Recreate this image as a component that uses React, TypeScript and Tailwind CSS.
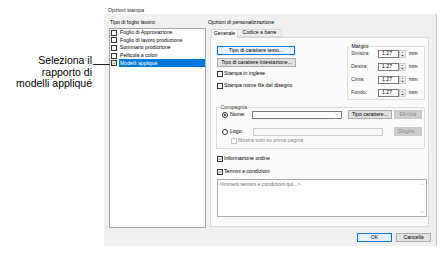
import React from "react";

const FONT = "font-['Liberation_Sans',Arial,sans-serif]";

function Check({ checked = false, disabled = false }: { checked?: boolean; disabled?: boolean }) {
  return (
    <span
      className={`w-[6px] h-[6px] shrink-0 border bg-white flex items-center justify-center ${
        disabled ? "border-[#c4c4c4]" : "border-[#333333]"
      }`}
    >
      {checked && (
        <svg viewBox="0 0 4 4" className="w-[4px] h-[4px]">
          <path d="M0.4 2 L1.5 3.1 L3.6 0.7" stroke="#222" strokeWidth="0.6" fill="none" />
        </svg>
      )}
    </span>
  );
}

function Radio({ on = false }: { on?: boolean }) {
  return (
    <span className="w-[6px] h-[6px] shrink-0 rounded-full border border-[#333333] bg-white flex items-center justify-center">
      {on && <span className="w-[2px] h-[2px] rounded-full bg-[#222]" />}
    </span>
  );
}

function Btn({
  label,
  w,
  primary = false,
  disabled = false,
}: {
  label: string;
  w: string;
  primary?: boolean;
  disabled?: boolean;
}) {
  return (
    <div
      className={`${w} h-[9px] shrink-0 border flex items-center justify-center leading-none ${
        primary
          ? "border-[#0078d7] bg-[#e5f1fb] text-black"
          : disabled
          ? "border-[#cccccc] bg-[#cccccc] text-[#8c8c8c]"
          : "border-[#adadad] bg-[#e1e1e1] text-black"
      }`}
    >
      {label}
    </div>
  );
}

function Spin() {
  return (
    <div className="w-[7px] h-[8px] border border-[#cfcfcf] bg-[#f0f0f0] flex flex-col">
      <div className="flex-1 flex items-center justify-center border-b border-[#d9d9d9]">
        <svg viewBox="0 0 4 2" className="w-[3px] h-[1.5px]">
          <path d="M0 2 L2 0 L4 2 Z" fill="#555" />
        </svg>
      </div>
      <div className="flex-1 flex items-center justify-center">
        <svg viewBox="0 0 4 2" className="w-[3px] h-[1.5px]">
          <path d="M0 0 L2 2 L4 0 Z" fill="#555" />
        </svg>
      </div>
    </div>
  );
}

const sheets = [
  "Foglio di Approvazione",
  "Foglio di lavoro produzione",
  "Sommario produzione",
  "Pellicola a colori",
  "Modelli appliqué",
];

const margins = ["Sinistra:", "Destra:", "Cima:", "Fondo:"];

export default function App() {
  return (
    <div className={`w-[448px] h-[261px] bg-white flex overflow-hidden ${FONT}`}>
      {/* annotazione */}
      <div className="w-[104px] shrink-0 relative">
        <div className="pt-[55px] pr-[12px] text-right text-[10.5px] leading-[11.5px] text-black">
          Seleziona il
          <br />
          rapporto di
          <br />
          modelli appliqué
        </div>
        <div className="absolute left-[93px] top-[64px] w-[17px] h-px bg-[#222]" />
      </div>

      {/* dialogo */}
      <div className="w-[333px] shrink-0 flex flex-col text-[5.2px] leading-none text-black">
        <div className="h-[14px] pl-[4px] pt-[8px] text-[#222]">Opzioni stampa</div>

        <div className="h-[232px] bg-[#f0f0f0] border-r border-[#c8c8c8] flex flex-col pl-[5px] pt-[3px]">
          <div className="flex">
            {/* tipo di foglio */}
            <div className="w-[97px] shrink-0 flex flex-col">
              <div className="h-[11px] pl-[1px] flex items-center">Tipo di foglio lavoro</div>
              <div className="h-[200px] bg-white border border-[#a8a8a8] pl-[1px]">
                {sheets.map((s, i) => (
                  <div key={s} className="h-[7.6px] flex items-center gap-[2px]">
                    <Check checked={i === 4} />
                    <span
                      className={`h-full flex-1 flex items-center pl-[1px] ${
                        i === 4 ? "bg-[#0078d7] text-white" : ""
                      }`}
                    >
                      {s}
                    </span>
                  </div>
                ))}
              </div>
            </div>

            {/* opzioni di personalizzazione */}
            <div className="ml-[2px] w-[222px] shrink-0 flex flex-col">
              <div className="h-[11px] flex items-center">Opzioni di personalizzazione</div>
              <div className="h-[9px] flex items-end pl-[3px]">
                <div className="h-[9px] w-[27px] bg-[#fafafa] border border-b-0 border-[#d9d9d9] flex items-center justify-center -mb-px relative z-10">
                  Generale
                </div>
                <div className="h-[8px] w-[44px] bg-[#f0f0f0] border border-l-0 border-[#d9d9d9] flex items-center justify-center">
                  Codice a barre
                </div>
              </div>

              <div className="ml-[2px] w-[219px] h-[190px] bg-[#fafafa] border border-[#d9d9d9] flex flex-col pl-[5px] pr-[3px] pt-[8px]">
                {/* riga superiore */}
                <div className="flex h-[54px]">
                  <div className="flex flex-col pl-[1px]">
                    <Btn label="Tipo di carattere testo..." w="w-[78px]" primary />
                    <div className="mt-[3px]">
                      <Btn label="Tipo di carattere intestazione..." w="w-[79px]" />
                    </div>
                    <div className="mt-[4px] flex items-center gap-[1px] h-[6px]">
                      <Check />
                      Stampa in inglese
                    </div>
                    <div className="mt-[6px] flex items-center gap-[1px] h-[6px]">
                      <Check />
                      Stampa nome file del disegno
                    </div>
                  </div>

                  <div className="ml-auto w-[78px] h-[54px] border border-[#dcdcdc] rounded-[1px] relative flex flex-col pl-[3px] pt-[3px] gap-[5px]">
                    <span className="absolute -top-[3px] left-[3px] bg-[#fafafa] px-[0.5px]">Margini</span>
                    {margins.map((m) => (
                      <div key={m} className="h-[8px] flex items-center">
                        <span className="w-[27px] text-[#333]">{m}</span>
                        <div className="w-[21px] h-[8px] bg-white border border-[#7a7a7a] flex items-center pl-[3px]">
                          1.27
                        </div>
                        <Spin />
                        <span className="ml-[3px]">mm</span>
                      </div>
                    ))}
                  </div>
                </div>

                {/* compagnia */}
                <div className="mt-[7px] h-[42px] border border-[#dcdcdc] rounded-[1px] relative flex flex-col pl-[5px] pr-[2px] pt-[2px]">
                  <span className="absolute -top-[3px] left-[3px] bg-[#fafafa] px-[0.5px] text-[#333]">Compagnia</span>
                  <div className="h-[9px] flex items-center">
                    <Radio on />
                    <span className="ml-[2px] w-[23px]">Nome:</span>
                    <div className="w-[92px] h-[8px] bg-white border border-[#7a7a7a] flex items-center justify-end pr-[2px]">
                      <svg viewBox="0 0 6 4" className="w-[4px] h-[2.5px]">
                        <path d="M0.5 0.5 L3 3 L5.5 0.5" stroke="#777" strokeWidth="0.8" fill="none" />
                      </svg>
                    </div>
                    <div className="ml-[6px]">
                      <Btn label="Tipo carattere..." w="w-[44px]" />
                    </div>
                    <div className="ml-[2px]">
                      <Btn label="Elimina" w="w-[28px]" disabled />
                    </div>
                  </div>
                  <div className="mt-[8px] h-[9px] flex items-center">
                    <Radio />
                    <span className="ml-[2px] w-[23px]">Logo:</span>
                    <div className="w-[133px] h-[8px] bg-[#f7f7f7] border border-[#cccccc]" />
                    <div className="ml-[11px]">
                      <Btn label="Sfoglia..." w="w-[28px]" disabled />
                    </div>
                  </div>
                  <div className="mt-[2px] h-[6px] flex items-center pl-[9px] gap-[1px] text-[#8c8c8c]">
                    <Check disabled />
                    Mostra solo su prima pagina
                  </div>
                </div>

                <div className="mt-[7px] h-[6px] flex items-center gap-[1px] pl-[1px]">
                  <Check checked />
                  Informazione ordine
                </div>
                <div className="mt-[7px] h-[6px] flex items-center gap-[1px] pl-[1px]">
                  <Check checked />
                  Termini e condizioni
                </div>

                <div className="mt-[4px] ml-[1px] w-[210px] h-[38px] bg-white border border-[#abadb3] flex">
                  <div className="flex-1 pl-[1px] pt-[2px] text-[#6d6d6d]">&lt;Immetti termini e condizioni qui...&gt;</div>
                  <div className="w-[8px] flex flex-col justify-between items-center py-[3px]">
                    <svg viewBox="0 0 6 4" className="w-[4px] h-[2.5px]">
                      <path d="M0.5 3.5 L3 1 L5.5 3.5" stroke="#999" strokeWidth="0.8" fill="none" />
                    </svg>
                    <svg viewBox="0 0 6 4" className="w-[4px] h-[2.5px]">
                      <path d="M0.5 0.5 L3 3 L5.5 0.5" stroke="#999" strokeWidth="0.8" fill="none" />
                    </svg>
                  </div>
                </div>
              </div>
            </div>
          </div>

          {/* pulsanti */}
          <div className="mt-[5px] flex items-center justify-end pr-[5px] gap-[4px] relative">
            <Btn label="OK" w="w-[35px]" primary />
            <Btn label="Cancella" w="w-[35px]" />
            <span className="absolute right-[1px] top-[6px] text-[4px] text-[#aaa]">⋰</span>
          </div>
        </div>
      </div>
    </div>
  );
}
